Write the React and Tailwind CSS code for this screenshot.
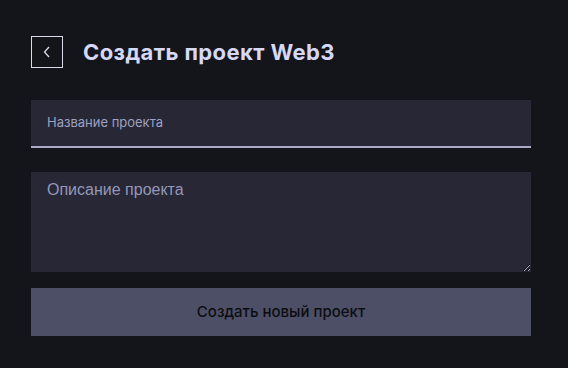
import { useState } from "react";

export default function App() {
  const [name, setName] = useState("");
  const [desc, setDesc] = useState("");

  return (
    <div className="min-h-screen w-full bg-[#14151a] font-['Inter',sans-serif]">
      <div className="w-[500px] pl-[31px] pt-[36px] box-content">
        <div className="flex items-center gap-5 h-8">
          <button className="w-8 h-8 border border-[#d9dbe8] flex items-center justify-center text-[#d9dbe8]">
            <svg width="8" height="12" viewBox="0 0 8 12" fill="none">
              <path d="M6 1L1.5 6L6 11" stroke="currentColor" strokeWidth="1.3" />
            </svg>
          </button>
          <h1 className="text-[22px] font-bold text-[#d5d9f7] leading-none tracking-[0.4px]">
            Создать проект Web3
          </h1>
        </div>

        <div className="mt-8 h-12 bg-[#272735] border-b-2 border-[#a9aac6] flex items-center px-4">
          <input
            value={name}
            onChange={(e) => setName(e.target.value)}
            placeholder="Название проекта"
            className="w-full bg-transparent outline-none text-[13px] text-[#d5d9f7] placeholder:text-[#9fa1c2]"
          />
        </div>

        <textarea
          value={desc}
          onChange={(e) => setDesc(e.target.value)}
          placeholder="Описание проекта"
          className="mt-[24px] block w-full h-[100px] bg-[#272735] px-4 pt-[6px] outline-none text-[16px] leading-[24px] font-['Liberation_Sans',sans-serif] text-[#d5d9f7] placeholder:text-[#9497b9]"
        />

        <button className="mt-[16px] w-full h-12 bg-[#4c4f66] text-[15px] font-medium text-[#0c0d11]">
          Создать новый проект
        </button>
      </div>
    </div>
  );
}
